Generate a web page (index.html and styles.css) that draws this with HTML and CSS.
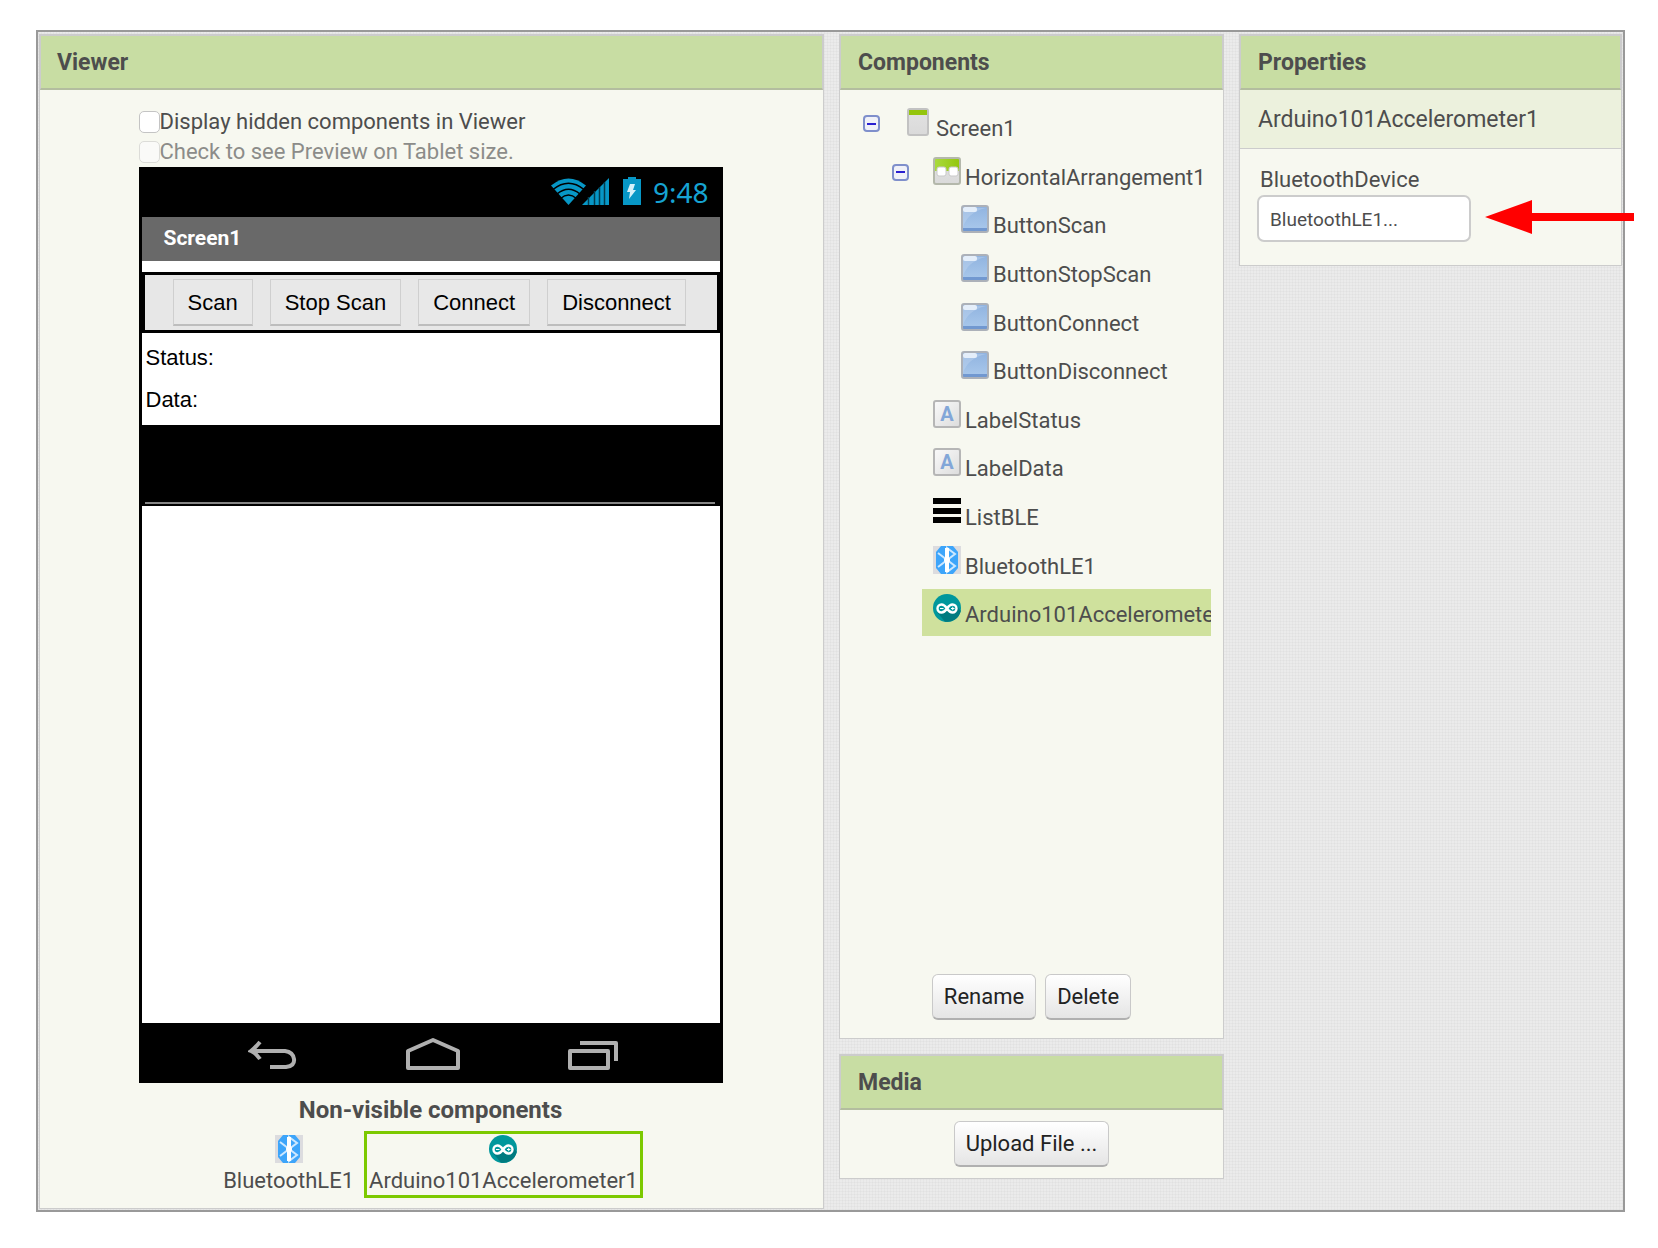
FILE: index.html
```html
<!DOCTYPE html>
<html lang="en">
<head>
<meta charset="utf-8">
<meta name="viewport" content="width=device-width, initial-scale=1">
<title>App Designer</title>
<link rel="stylesheet" href="styles.css">
</head>
<body>
<svg class="sprite" aria-hidden="true">
  <defs>
    <linearGradient id="g-grey" x1="0" y1="0" x2="0" y2="1"><stop offset="0" stop-color="#e2e2e2"/><stop offset="1" stop-color="#dadada"/></linearGradient>
    <linearGradient id="g-green" x1="0" y1="0" x2="1" y2="0"><stop offset="0" stop-color="#aadb3f"/><stop offset="1" stop-color="#93c60c"/></linearGradient>
    <linearGradient id="g-blue" x1="0" y1="0" x2="0" y2="1"><stop offset="0" stop-color="#90b3df"/><stop offset="1" stop-color="#aac9ec"/></linearGradient>
    <linearGradient id="g-label" x1="0" y1="0" x2="1" y2="1"><stop offset="0" stop-color="#fafafa"/><stop offset="1" stop-color="#dcdcdc"/></linearGradient>
  </defs>
  <symbol id="i-screen" viewBox="0 0 22 28">
    <rect x="1" y="1" width="20" height="26" rx="2" fill="url(#g-grey)"/>
    <rect x="1" y="1" width="20" height="26" rx="2" fill="none" stroke="#c2c2c2" stroke-width="2"/>
    <path d="M2 2h18v5H2z" fill="#94c50c"/>
  </symbol>
  <symbol id="i-horizontal" viewBox="0 0 28 28">
    <rect x="1" y="1" width="26" height="26" rx="2" fill="url(#g-grey)"/>
    <path d="M1 1h26v13H1z" fill="url(#g-green)"/>
    <rect x="4" y="10" width="9" height="9" rx="2" fill="#fff" stroke="#c9c9c9"/>
    <rect x="16" y="10" width="9" height="9" rx="2" fill="#fff" stroke="#c9c9c9"/>
    <rect x="1" y="1" width="26" height="26" rx="2" fill="none" stroke="#b4b8ab" stroke-width="2"/>
  </symbol>
  <symbol id="i-button" viewBox="0 0 28 28">
    <rect x="1" y="1" width="26" height="26" rx="2" fill="url(#g-blue)"/>
    <path d="M2 22C5 13 12 6 25 3H2z" fill="#c3d8f1" opacity=".4"/>
    <path d="M2 23h24v4H2z" fill="#7198d0"/>
    <rect x="2" y="2" width="14" height="5" rx="2" fill="#e4eefa"/>
    <rect x="1" y="1" width="26" height="26" rx="2" fill="none" stroke="#acb1b9" stroke-width="2"/>
  </symbol>
  <symbol id="i-list" viewBox="0 0 28 28">
    <path d="M0 1h28v6H0zM0 11h28v6H0zM0 20h28v6H0z" fill="#000"/>
  </symbol>
  <symbol id="i-bluetooth" viewBox="0 0 28 28">
    <path d="M0 0h28v28H0z" fill="#dcdcdf"/>
    <path d="M8 0h12l5 6v16l-5 6H8l-5-6V6z" fill="#3da5fa"/>
    <path d="M5 7l17 13-8 6V2l8 6L5 21" fill="none" stroke="#cde8ff" stroke-width="2"/>
    <path d="M14 2v24" stroke="#fff" stroke-width="4"/>
    <circle cx="14" cy="14" r="3" fill="#fff"/>
  </symbol>
  <symbol id="i-arduino" viewBox="0 0 28 28">
    <circle cx="14" cy="14" r="14" fill="#00979c"/>
    <path d="M4 18l8 9.700a14 14 0 0 0 15.800-11L24 12z" fill="#007b80"/>
    <path d="M14 14.500C12 11.500 10.500 10.500 8.500 10.500a4 4 0 0 0 0 8c2 0 3.500-1 5.500-4s3.500-4 5.500-4a4 4 0 0 1 0 8c-2 0-3.500-1-5.500-4z" fill="#00979c" stroke="#fff" stroke-width="2.400"/>
    <path d="M7 14.500h3.500M18 14.500h3.500M19.750 12.750v3.500" stroke="#fff" stroke-width="1"/>
  </symbol>
</svg>

<main class="designer">
  <section class="panel viewer">
    <h2 class="panel-title">Viewer</h2>
    <div class="viewer-body">
      <div class="stage">
        <label class="check"><input type="checkbox">Display hidden components in Viewer</label>
        <label class="check check-off"><input type="checkbox" disabled>Check to see Preview on Tablet size.</label>
        <div class="phone">
          <div class="phone-status">
            <svg class="status-icons" width="92" height="30" viewBox="0 0 92 30" aria-hidden="true">
              <path d="M1 8.500Q18.500-5.500 36 8.500L18.500 28z" fill="#0797c6"/>
              <path d="M3 12.500Q18.500 0 34 12.500M7 17Q18.500 7.500 30 17M10.500 21.500Q18.500 14.500 26.500 21.500" fill="none" stroke="#000" stroke-width="1.600"/>
              <path d="M32 28L59 1v27z" fill="#0797c6"/>
              <path d="M38.500 20v8M44.500 14v14M49.500 10v18M54.500 5v23" stroke="#023b4d" stroke-width="1.500"/>
              <path d="M73 2h5V0h8v2h5v26H73z" fill="#0797c6"/>
              <path d="M80 7h5l-2 6h3l-7 9 1-7h-3z" fill="#d5f1fa"/>
            </svg>
            <span class="clock">9:48</span>
          </div>
          <div class="phone-title">Screen1</div>
          <div class="phone-screen">
            <div class="arrangement">
              <button class="app-btn" type="button">Scan</button>
              <button class="app-btn" type="button">Stop Scan</button>
              <button class="app-btn" type="button">Connect</button>
              <button class="app-btn" type="button">Disconnect</button>
            </div>
            <div class="app-labels">
              <span>Status:</span>
              <span>Data:</span>
            </div>
            <div class="app-list"></div>
          </div>
          <div class="phone-nav">
            <svg width="50" height="36" viewBox="0 0 50 36" aria-hidden="true"><path d="M12 5Q7 11 3 14q5 2 9 8M4 14h33q8 1 9 8t-8 8H22" fill="none" stroke="#b0b0b0" stroke-width="4"/></svg>
            <svg width="54" height="36" viewBox="0 0 54 36" aria-hidden="true"><path d="M2 31V14L27 3l25 11v17z" fill="none" stroke="#b0b0b0" stroke-width="4" stroke-linejoin="round"/></svg>
            <svg width="50" height="36" viewBox="0 0 50 36" aria-hidden="true"><path d="M2 14h38v17H2zM12 6h36v18" fill="none" stroke="#b0b0b0" stroke-width="4" stroke-linejoin="round"/></svg>
          </div>
        </div>
        <h3 class="hidden-title">Non-visible components</h3>
        <div class="hidden-list">
          <div class="hidden-item"><svg width="28" height="28" aria-hidden="true"><use href="#i-bluetooth"/></svg><span>BluetoothLE1</span></div>
          <div class="hidden-item hidden-item-on"><svg width="28" height="28" aria-hidden="true"><use href="#i-arduino"/></svg><span>Arduino101Accelerometer1</span></div>
        </div>
      </div>
    </div>
  </section>

  <div class="column">
    <section class="panel components">
      <h2 class="panel-title">Components</h2>
      <div class="components-body">
        <ul class="tree">
          <li class="node level-0"><button class="toggle" type="button" aria-label="Collapse Screen1"></button><svg class="icon-tall" width="22" height="28" aria-hidden="true"><use href="#i-screen"/></svg><span>Screen1</span></li>
          <li class="node level-1"><button class="toggle" type="button" aria-label="Collapse HorizontalArrangement1"></button><svg width="28" height="28" aria-hidden="true"><use href="#i-horizontal"/></svg><span>HorizontalArrangement1</span></li>
          <li class="node level-3"><svg width="28" height="28" aria-hidden="true"><use href="#i-button"/></svg><span>ButtonScan</span></li>
          <li class="node level-3"><svg width="28" height="28" aria-hidden="true"><use href="#i-button"/></svg><span>ButtonStopScan</span></li>
          <li class="node level-3"><svg width="28" height="28" aria-hidden="true"><use href="#i-button"/></svg><span>ButtonConnect</span></li>
          <li class="node level-3"><svg width="28" height="28" aria-hidden="true"><use href="#i-button"/></svg><span>ButtonDisconnect</span></li>
          <li class="node level-2"><svg width="28" height="28" viewBox="0 0 28 28" aria-hidden="true"><rect x="1" y="1" width="26" height="26" rx="2" fill="url(#g-label)" stroke="#b6b6b6" stroke-width="2"/><text x="14" y="21" text-anchor="middle" class="glyph">A</text></svg><span>LabelStatus</span></li>
          <li class="node level-2"><svg width="28" height="28" viewBox="0 0 28 28" aria-hidden="true"><rect x="1" y="1" width="26" height="26" rx="2" fill="url(#g-label)" stroke="#b6b6b6" stroke-width="2"/><text x="14" y="21" text-anchor="middle" class="glyph">A</text></svg><span>LabelData</span></li>
          <li class="node level-2"><svg width="28" height="28" aria-hidden="true"><use href="#i-list"/></svg><span>ListBLE</span></li>
          <li class="node level-2"><svg width="28" height="28" aria-hidden="true"><use href="#i-bluetooth"/></svg><span>BluetoothLE1</span></li>
          <li class="node level-2 node-on"><svg width="28" height="28" aria-hidden="true"><use href="#i-arduino"/></svg><span>Arduino101Accelerometer1</span></li>
        </ul>
        <div class="actions">
          <button class="btn" type="button">Rename</button>
          <button class="btn" type="button">Delete</button>
        </div>
      </div>
    </section>
    <section class="panel">
      <h2 class="panel-title">Media</h2>
      <div class="media-body"><button class="btn" type="button">Upload File ...</button></div>
    </section>
  </div>

  <section class="panel properties">
    <h2 class="panel-title">Properties</h2>
    <div class="selected-name">Arduino101Accelerometer1</div>
    <div class="property">
      <label for="device">BluetoothDevice</label>
      <div class="field">
        <input id="device" type="text" value="BluetoothLE1..." readonly>
        <svg class="pointer" width="149" height="34" viewBox="0 0 149 34" aria-hidden="true"><path d="M0 17L47 0v13h102v8H47v13z" fill="#f00"/></svg>
      </div>
    </div>
  </section>
</main>
</body>
</html>
```
FILE: styles.css
```css
* {
  box-sizing: border-box;
}

body {
  margin: 0;
  padding: 30px 33px 35px 36px;
  background: #fff;
  color: #4d4d4d;
  font: 22px/26px Roboto, "Noto Sans", sans-serif;
}

h2, h3, ul {
  margin: 0;
  padding: 0;
}

svg {
  flex: none;
}

.sprite {
  position: absolute;
  width: 0;
  height: 0;
}

.glyph {
  font: bold 20px Roboto, sans-serif;
  fill: #82a6d8;
}

.designer {
  display: grid;
  grid-template-columns: minmax(620px, 1fr) 385px 383px;
  gap: 15px;
  align-items: start;
  padding: 2px 1px 1px;
  border: 2px solid #999;
  background-color: #ebebeb;
  background-image:
    repeating-linear-gradient(90deg, rgba(0, 0, 0, .025) 0 1px, transparent 1px 3px),
    repeating-linear-gradient(0deg, rgba(0, 0, 0, .025) 0 1px, transparent 1px 3px);
}

.panel {
  border: 1px solid #ccc;
  background: #f7f8f0;
}

.panel-title {
  padding: 13px 17px 12px;
  border: 1px solid #ccc;
  border-bottom: 2px solid #b3bd9f;
  background: #c8dda3;
  color: #4d4d4d;
  font-size: 23px;
  line-height: 27px;
  font-weight: 700;
}

.viewer .panel-title {
  padding-left: 16px;
}

.viewer-body {
  display: flex;
  justify-content: center;
  padding: 17px 2px 10px 0;
}

.stage {
  width: 584px;
}

.check {
  display: flex;
  align-items: center;
  height: 30px;
}

.check input {
  appearance: none;
  width: 21px;
  height: 22px;
  margin: 0;
  border: 1px solid #c4c4c4;
  border-radius: 5px;
  background: #fff;
}

.check-off {
  color: #8c8c89;
}

.check-off input {
  border-color: #dcdcd8;
  background: #fafaf8;
}

.phone {
  padding: 0 3px;
  background: #000;
}

.phone-status {
  display: flex;
  align-items: center;
  justify-content: flex-end;
  gap: 11px;
  height: 50px;
  padding: 0 11px 0 0;
}

.clock {
  color: #16a3d2;
  font: 28px/32px "Noto Sans", sans-serif;
}

.phone-title {
  height: 44px;
  padding: 8px 22px;
  background: #696969;
  color: #fff;
  font-size: 21px;
  font-weight: 700;
}

.phone-screen {
  min-height: 762px;
  padding-top: 11px;
  background: #fff;
  color: #000;
  font-family: "Liberation Sans", Arial, sans-serif;
}

.arrangement {
  display: flex;
  gap: 17px;
  padding: 4px 28px;
  border: 3px solid #000;
  background: #e7e7e7;
}

.app-btn {
  height: 47px;
  padding: 1px 14px 0;
  border: 1px solid #cfcfcf;
  border-bottom: 2px solid #bdbdbd;
  background: #e8e8e8;
  color: #000;
  font: 22px/26px "Liberation Sans", Arial, sans-serif;
}

.app-labels {
  display: flex;
  flex-direction: column;
  gap: 16px;
  padding: 12px 4px;
}

.app-list {
  height: 81px;
  padding: 0 5px 0 3px;
  background: #000;
}

.app-list::after {
  content: "";
  display: block;
  height: 77px;
  border-bottom: 2px solid #868686;
}

.phone-nav {
  display: flex;
  justify-content: center;
  gap: 108px;
  height: 60px;
  padding: 14px 0 0 4px;
}

.hidden-title {
  padding-top: 14px;
  font-size: 24px;
  line-height: 26px;
  text-align: center;
}

.hidden-list {
  display: flex;
  justify-content: center;
  gap: 5px;
  padding-top: 8px;
}

.hidden-item {
  display: flex;
  flex-direction: column;
  align-items: center;
  gap: 5px;
  padding: 1px 2px;
  border: 3px solid transparent;
}

.hidden-item-on {
  border-color: #7cc900;
}

.column {
  display: flex;
  flex-direction: column;
  gap: 15px;
}

.components {
  display: flex;
  flex-direction: column;
  min-height: 1005px;
}

.components-body {
  display: flex;
  flex: 1;
  flex-direction: column;
  justify-content: space-between;
  padding: 13px 12px 18px;
}

.tree {
  display: grid;
  grid-auto-rows: 1fr;
  gap: 2px;
  height: 533px;
  list-style: none;
}

.node {
  display: flex;
  align-items: baseline;
  gap: 4px;
  padding: 5px 0 0 11px;
  overflow: hidden;
  white-space: nowrap;
}

.level-0 {
  margin-left: 0;
}

.level-1 {
  margin-left: 29px;
}

.level-2 {
  margin-left: 70px;
}

.level-3 {
  margin-left: 98px;
}

.node-on {
  background: #cfe19d;
}

.toggle {
  display: flex;
  align-self: flex-start;
  align-items: center;
  justify-content: center;
  width: 17px;
  height: 17px;
  margin: 7px 20px 0 0;
  padding: 0;
  border: 2px solid #7f8fcb;
  border-radius: 4px;
  background: #f0f1f8;
}

.toggle::before {
  content: "";
  width: 9px;
  height: 2px;
  background: #2a1fd0;
}

.icon-tall {
  margin: 0 3px;
}

.actions {
  display: flex;
  justify-content: center;
  gap: 9px;
}

.btn {
  height: 46px;
  padding: 0 11px;
  border: 1px solid #c9c9c9;
  border-bottom: 2px solid #b0b0b0;
  border-radius: 6px;
  background: linear-gradient(#fff, #e5e5e5);
  color: #222;
  font: 22px/26px Roboto, "Noto Sans", sans-serif;
}

.media-body {
  padding: 11px;
}

.media-body .btn {
  display: block;
  margin: 0 auto;
}

.selected-name {
  padding: 17px 18px 15px;
  border-bottom: 1px solid #ccc;
  background: #ecf1dd;
  font-size: 23px;
}

.property {
  padding: 18px 17px 23px;
}

.property label {
  display: block;
  padding: 0 0 2px 3px;
}

.field {
  position: relative;
}

.field input {
  display: block;
  width: 214px;
  height: 47px;
  padding: 1px 11px 0;
  border: 2px solid #ccc;
  border-radius: 7px;
  background: #fff;
  color: #4d4d4d;
  font: 19px/24px Roboto, "Noto Sans", sans-serif;
}

.pointer {
  position: absolute;
  top: 5px;
  left: 228px;
}
```
